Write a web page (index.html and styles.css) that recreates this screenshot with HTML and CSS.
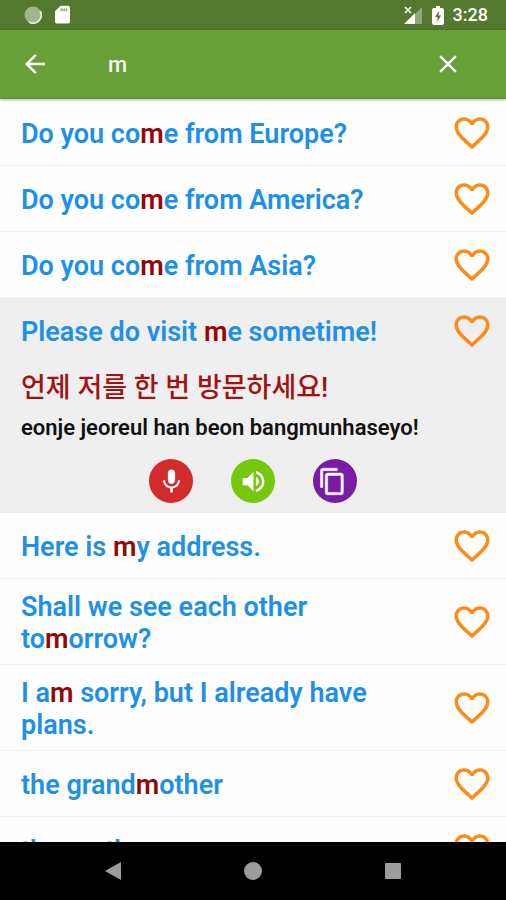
FILE: index.html
```html
<!DOCTYPE html>
<html lang="en">
<head>
<meta charset="utf-8">
<meta name="viewport" content="width=device-width, initial-scale=1">
<title>Phrase search</title>
<link rel="stylesheet" href="styles.css">
</head>
<body>
<svg class="defs" aria-hidden="true">
  <symbol id="heart" viewBox="0 0 24 24"><path d="M16.5 3c-1.74 0-3.41.81-4.5 2.09C10.91 3.81 9.24 3 7.5 3 4.42 3 2 5.42 2 8.5c0 3.78 3.4 6.86 8.55 11.54L12 21.35l1.45-1.32C18.6 15.36 22 12.28 22 8.5 22 5.42 19.58 3 16.5 3zm-4.4 15.55l-.1.1-.1-.1C7.14 14.24 4 11.39 4 8.5 4 6.5 5.5 5 7.5 5c1.54 0 3.04.99 3.57 2.36h1.87C13.46 5.99 14.96 5 16.5 5c2 0 3.5 1.5 3.5 3.5 0 2.89-3.14 5.74-7.9 10.05z"/></symbol>
</svg>
<div class="status">
  <svg class="status-spin" viewBox="0 0 18 18" aria-hidden="true"><circle cx="9" cy="9" r="8.5" fill="#a0b78b"/><path d="M16 5A8 8 0 0 1 5 16" fill="none" stroke="#dfe8d6" stroke-width="2"/></svg>
  <svg class="status-card" viewBox="0 0 16 20" aria-hidden="true"><path fill="#fff" d="M6 0h8q2 0 2 2v15q0 2-2 2H2q-2 0-2-2V6z"/><path fill="#7d9a62" d="M6 3h2v3H6zM9 3h1.500v3H9zM11.500 3H13v3h-1.500z"/></svg>
  <span class="spacer"></span>
  <svg class="status-signal" viewBox="0 0 18 18" aria-hidden="true"><path fill="#8fa779" d="M18 1v17H11V8z"/><path fill="#fff" d="M11 7v11H0z"/><path d="M1 1l6 6M7 1L1 7" stroke="#fff" stroke-width="1.6"/></svg>
  <svg class="status-battery" viewBox="0 0 12 19" aria-hidden="true"><path fill="#fff" d="M4 0h4v2h2q2 0 2 2v13q0 2-2 2H2q-2 0-2-2V4q0-2 2-2h2z"/><path fill="#52792d" d="M7 5l-4 6h2.500v4.500L9 9.500H6.500z"/></svg>
  <span class="clock">3:28</span>
</div>
<header class="appbar">
  <button class="icon-btn" aria-label="Back"><svg viewBox="0 0 24 24"><path d="M20 11H7.830l5.590-5.590L12 4l-8 8 8 8 1.410-1.410L7.830 13H20v-2z"/></svg></button>
  <input class="search" type="text" value="m" aria-label="Search phrases">
  <button class="icon-btn" aria-label="Clear"><svg viewBox="0 0 24 24"><path d="M19 6.410L17.590 5 12 10.590 6.410 5 5 6.410 10.590 12 5 17.590 6.410 19 12 13.410 17.590 19 19 17.590 13.410 12z"/></svg></button>
</header>
<main class="list">
  <article class="row"><p class="phrase">Do you co<mark>m</mark>e from Europe?</p><button class="fav" aria-label="Favourite"><svg><use href="#heart"/></svg></button></article>
  <article class="row"><p class="phrase">Do you co<mark>m</mark>e from America?</p><button class="fav" aria-label="Favourite"><svg><use href="#heart"/></svg></button></article>
  <article class="row"><p class="phrase">Do you co<mark>m</mark>e from Asia?</p><button class="fav" aria-label="Favourite"><svg><use href="#heart"/></svg></button></article>
  <section class="open">
    <div class="row"><p class="phrase">Please do visit <mark>m</mark>e sometime!</p><button class="fav" aria-label="Favourite"><svg><use href="#heart"/></svg></button></div>
    <p class="korean" lang="ko">언제 저를 한 번 방문하세요!</p>
    <p class="roman">eonje jeoreul han beon bangmunhaseyo!</p>
    <div class="actions">
      <button class="round mic" aria-label="Record"><svg viewBox="0 0 24 24"><path d="M12 14c1.660 0 3-1.340 3-3V5c0-1.660-1.340-3-3-3S9 3.340 9 5v6c0 1.660 1.340 3 3 3zm5.300-3c0 3-2.540 5.100-5.300 5.100S6.700 14 6.700 11H5c0 3.410 2.720 6.230 6 6.720V21h2v-3.280c3.280-.48 6-3.300 6-6.720h-1.700z"/></svg></button>
      <button class="round sound" aria-label="Listen"><svg viewBox="0 0 24 24"><path d="M3 9v6h4l5 5V4L7 9H3zm13.500 3c0-1.770-1.020-3.290-2.500-4.030v8.050c1.480-.73 2.500-2.250 2.500-4.020zM14 3.230v2.060c2.890.86 5 3.540 5 6.710s-2.110 5.850-5 6.710v2.060c4.010-.91 7-4.490 7-8.770s-2.990-7.860-7-8.770z"/></svg></button>
      <button class="round copy" aria-label="Copy"><svg viewBox="0 0 24 24"><path d="M16 1H4c-1.100 0-2 .9-2 2v14h2V3h12V1zm3 4H8c-1.100 0-2 .9-2 2v14c0 1.100.9 2 2 2h11c1.100 0 2-.9 2-2V7c0-1.100-.9-2-2-2zm0 16H8V7h11v14z"/></svg></button>
    </div>
  </section>
  <article class="row"><p class="phrase">Here is <mark>m</mark>y address.</p><button class="fav" aria-label="Favourite"><svg><use href="#heart"/></svg></button></article>
  <article class="row"><p class="phrase">Shall we see each other to<mark>m</mark>orrow?</p><button class="fav" aria-label="Favourite"><svg><use href="#heart"/></svg></button></article>
  <article class="row"><p class="phrase">I a<mark>m</mark> sorry, but I already have plans.</p><button class="fav" aria-label="Favourite"><svg><use href="#heart"/></svg></button></article>
  <article class="row"><p class="phrase">the grand<mark>m</mark>other</p><button class="fav" aria-label="Favourite"><svg><use href="#heart"/></svg></button></article>
  <article class="row"><p class="phrase">the <mark>m</mark>other</p><button class="fav" aria-label="Favourite"><svg><use href="#heart"/></svg></button></article>
</main>
<nav class="navbar">
  <button aria-label="Back"><svg viewBox="0 0 18 18"><path d="M17 0v18L1 9z"/></svg></button>
  <button aria-label="Home"><svg viewBox="0 0 18 18"><circle cx="9" cy="9" r="9"/></svg></button>
  <button aria-label="Recents"><svg viewBox="0 0 18 18"><rect x="1" y="1" width="16" height="16" rx="1"/></svg></button>
</nav>
</body>
</html>
```
FILE: styles.css
```css
* { box-sizing: border-box; }
body {
  margin: 0;
  height: 100vh;
  display: flex;
  flex-direction: column;
  overflow: hidden;
  background: #fefefe;
  font-family: Roboto, "Noto Sans CJK KR", sans-serif;
}
.defs { position: absolute; width: 0; height: 0; }
p { margin: 0; }
button { border: 0; padding: 0; background: none; display: grid; place-items: center; }
svg { display: block; }

.status {
  flex: none;
  height: 30px;
  display: flex;
  align-items: center;
  padding: 0 18px 0 24px;
  background: #52792d;
}
.spacer { flex: 1; }
.status-spin { width: 18px; height: 18px; margin-right: 13px; }
.status-card { width: 15px; height: 20px; }
.status-signal { width: 18px; height: 18px; margin-right: 10px; }
.status-battery { width: 12px; height: 19px; margin-right: 9px; }
.clock { color: #fff; font-size: 18px; font-weight: 500; line-height: 32px; }

.appbar {
  flex: none;
  height: 69px;
  display: flex;
  align-items: center;
  padding: 0 43px 0 20px;
  background: #689f38;
  border-bottom: 1px solid #5a9418;
  box-shadow: 0 1px 3px rgba(0, 0, 0, 0.3);
  z-index: 1;
}
.icon-btn { width: 30px; height: 30px; }
.icon-btn svg { width: 30px; height: 30px; fill: #fff; }
.search {
  flex: 1;
  min-width: 0;
  margin-left: 58px;
  padding: 2px 0 0;
  border: 0;
  outline: 0;
  background: none;
  color: #f4f8ef;
  font: 500 22px/30px Roboto, sans-serif;
}

.list { flex: 1; min-height: 0; overflow: hidden; padding-top: 1px; }
.row {
  min-height: 66px;
  display: flex;
  align-items: center;
  padding: 9px 13px 9px 21px;
  border-bottom: 1px solid #f1f1f1;
}
.phrase {
  flex: 1;
  padding: 3px 50px 0 0;
  color: #1e90e8;
  font-size: 27px;
  font-weight: 600;
  line-height: 32px;
}
mark { background: none; color: #920808; }
.fav { flex: none; width: 42px; height: 42px; }
.fav svg { width: 42px; height: 42px; fill: #fb8c1a; }

.open { background: #efefef; padding-bottom: 10px; }
.open .row { border-bottom-color: transparent; }
.korean {
  padding: 4px 21px 0;
  color: #a31212;
  font-size: 27px;
  font-weight: 500;
  line-height: 40px;
}
.roman {
  padding: 4px 21px 0;
  color: #111;
  font-size: 22px;
  font-weight: 600;
  line-height: 32px;
}
.actions { display: flex; justify-content: center; gap: 38px; padding-top: 15px; }
.round { width: 44px; height: 44px; border-radius: 50%; }
.round svg { width: 29px; height: 29px; fill: #fff; }
.mic { background: #d32c2c; }
.sound { background: #76c80e; }
.copy { background: #7b1aa2; padding-right: 5px; }
.copy svg { stroke: #fff; stroke-width: 0.4px; }

.navbar {
  flex: none;
  height: 58px;
  display: flex;
  align-items: center;
  justify-content: center;
  gap: 122px;
  background: #000;
}
.navbar svg { width: 18px; height: 18px; fill: #9c9c9c; }
```
